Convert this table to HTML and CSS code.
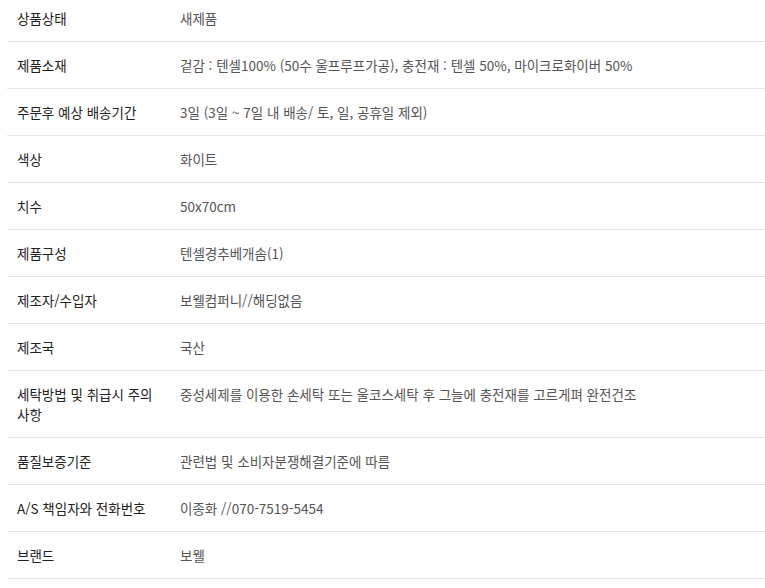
FILE: index.html
```html
<!DOCTYPE html>
<html lang="ko">
<head>
<meta charset="utf-8">
<link rel="stylesheet" href="styles.css">
</head>
<body>
<table class="spec">
  <tbody>
    <tr><th>상품상태</th><td>새제품</td></tr>
    <tr><th>제품소재</th><td>겉감 : 텐셀100% (50수 울프루프가공), 충전재 : 텐셀 50%, 마이크로화이버 50%</td></tr>
    <tr><th>주문후 예상 배송기간</th><td>3일 (3일 ~ 7일 내 배송/ 토, 일, 공휴일 제외)</td></tr>
    <tr><th>색상</th><td>화이트</td></tr>
    <tr><th>치수</th><td>50x70cm</td></tr>
    <tr><th>제품구성</th><td>텐셀경추베개솜(1)</td></tr>
    <tr><th>제조자/수입자</th><td>보웰컴퍼니//해딩없음</td></tr>
    <tr><th>제조국</th><td>국산</td></tr>
    <tr><th>세탁방법 및 취급시 주의 사항</th><td>중성세제를 이용한 손세탁 또는 울코스세탁 후 그늘에 충전재를 고르게펴 완전건조</td></tr>
    <tr><th>품질보증기준</th><td>관련법 및 소비자분쟁해결기준에 따름</td></tr>
    <tr><th>A/S 책임자와 전화번호</th><td>이종화 //070-7519-5454</td></tr>
    <tr><th>브랜드</th><td>보웰</td></tr>
  </tbody>
</table>
</body>
</html>
```
FILE: styles.css
```css
html, body {
  margin: 0;
  padding: 0;
  background: #fff;
}
body {
  padding-left: 7px;
  font-family: "Noto Sans CJK KR", "Noto Sans", sans-serif;
  font-size: 13.5px;
  line-height: 20px;
}
.spec {
  width: 758px;
  border-collapse: collapse;
}
.spec th,
.spec td {
  padding: 13px 10px;
  border-bottom: 1px solid #e6e6e6;
  text-align: left;
  vertical-align: top;
  word-break: keep-all;
}
.spec tr:first-child th,
.spec tr:first-child td {
  padding-top: 8px;
}
.spec th {
  width: 143px;
  font-weight: normal;
  color: #222;
}
.spec td {
  color: #555;
}
```
